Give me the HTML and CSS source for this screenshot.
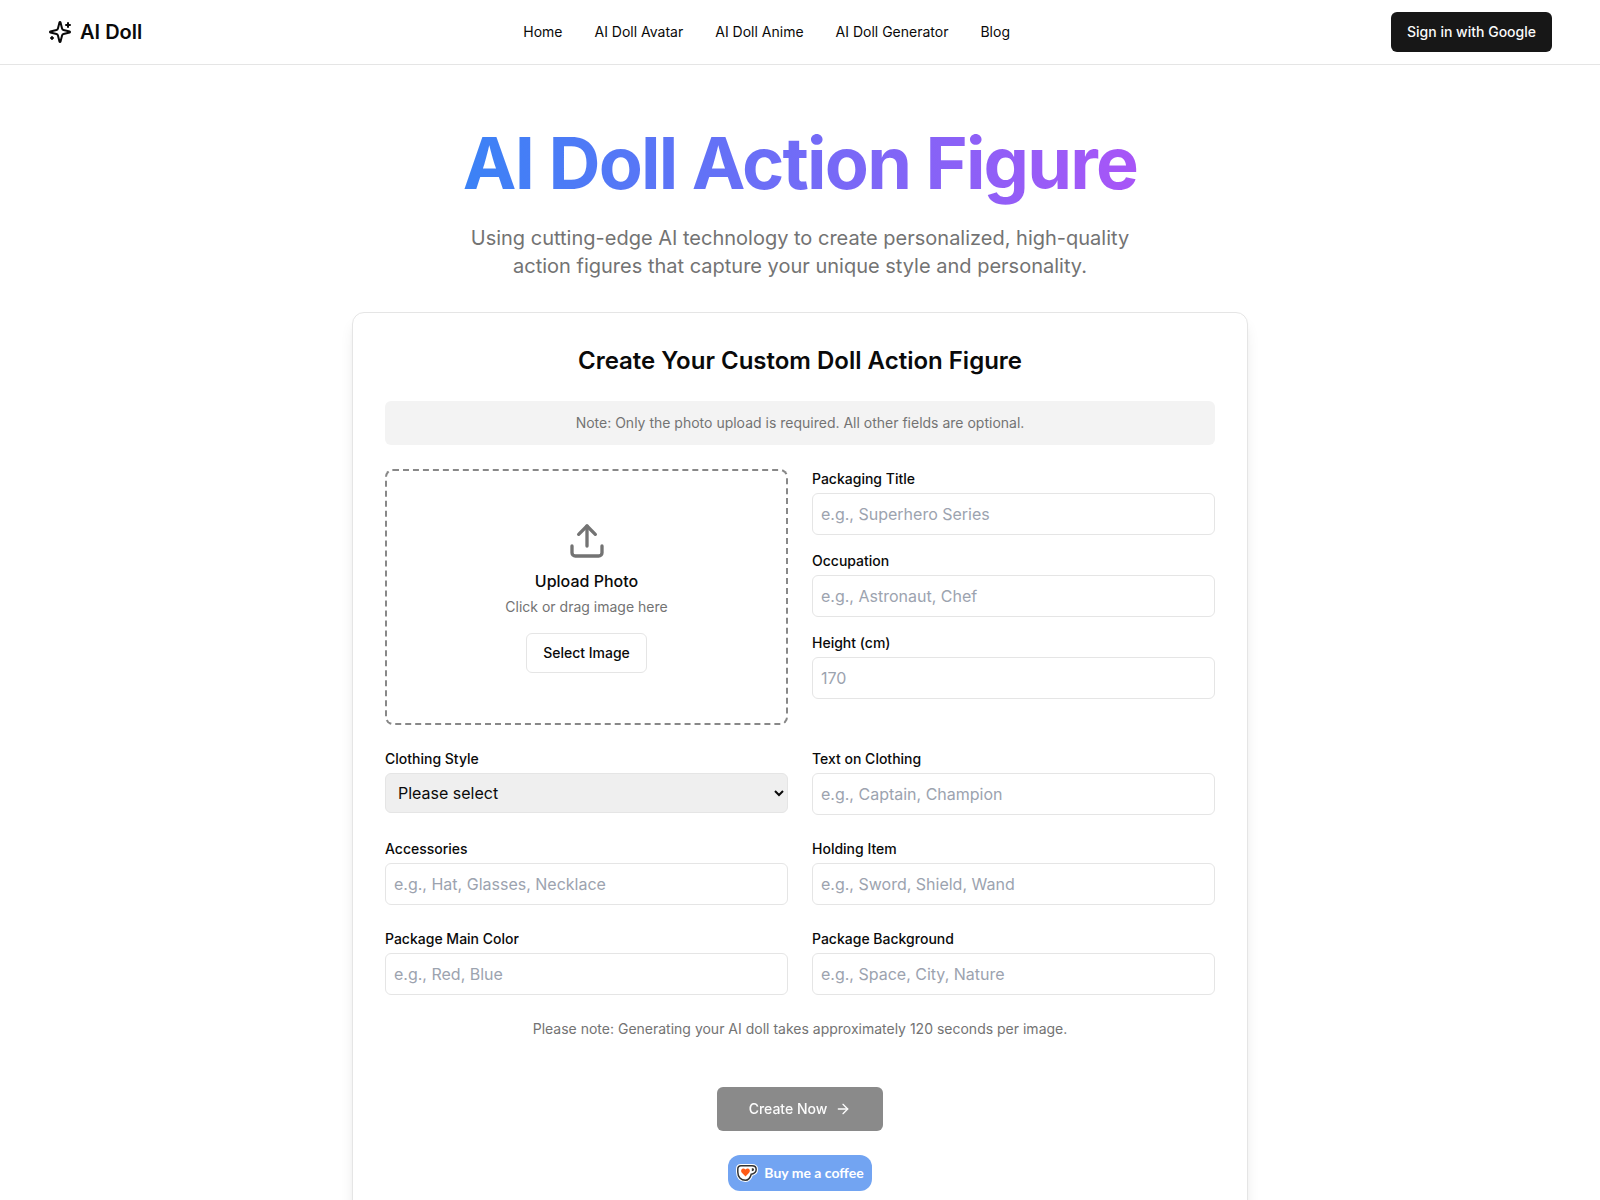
FILE: index.html
```html
<!DOCTYPE html>
<html lang="en">
<head>
    <meta charset="utf-8">
    <meta name="viewport" content="width=device-width, initial-scale=1">
    <title>AI Doll Action Figure</title>
    <link rel="stylesheet" href="styles.css">
</head>
<body>
    <header class="site-header">
        <a class="logo" href="#">
            <svg class="icon" width="24" height="24" viewBox="0 0 24 24" aria-hidden="true">
                <path d="M9.937 15.5A2 2 0 0 0 8.5 14.063l-6.135-1.582a.5.5 0 0 1 0-.962L8.5 9.936A2 2 0 0 0 9.937 8.5l1.582-6.135a.5.5 0 0 1 .963 0L14.063 8.5A2 2 0 0 0 15.5 9.937l6.135 1.581a.5.5 0 0 1 0 .964L15.5 14.063a2 2 0 0 0-1.437 1.437l-1.582 6.135a.5.5 0 0 1-.963 0z"/>
                <path d="M20 3v4"/>
                <path d="M22 5h-4"/>
                <path d="M4 17v2"/>
                <path d="M5 18H3"/>
            </svg>
            <span>AI Doll</span>
        </a>
        <nav class="site-nav">
            <a href="#">Home</a>
            <a href="#">AI Doll Avatar</a>
            <a href="#">AI Doll Anime</a>
            <a href="#">AI Doll Generator</a>
            <a href="#">Blog</a>
        </nav>
        <button class="btn btn-primary" type="button">Sign in with Google</button>
    </header>

    <main class="page">
        <h1 class="hero-title">AI Doll Action Figure</h1>
        <p class="hero-text">Using cutting-edge AI technology to create personalized, high-quality action figures that capture your unique style and personality.</p>

        <form class="card">
            <h2 class="card-title">Create Your Custom Doll Action Figure</h2>
            <p class="note">Note: Only the photo upload is required. All other fields are optional.</p>

            <div class="form-grid">
                <div class="upload">
                    <svg class="icon upload-icon" width="40" height="40" viewBox="0 0 24 24" aria-hidden="true">
                        <path d="M21 15v4a2 2 0 0 1-2 2H5a2 2 0 0 1-2-2v-4"/>
                        <path d="m17 8-5-5-5 5"/>
                        <path d="M12 3v12"/>
                    </svg>
                    <p class="upload-title">Upload Photo</p>
                    <p class="upload-hint">Click or drag image here</p>
                    <button class="btn btn-outline" type="button">Select Image</button>
                </div>

                <div class="field-stack">
                    <div class="field">
                        <label for="title">Packaging Title</label>
                        <input type="text" id="title" placeholder="e.g., Superhero Series">
                    </div>
                    <div class="field">
                        <label for="occupation">Occupation</label>
                        <input type="text" id="occupation" placeholder="e.g., Astronaut, Chef">
                    </div>
                    <div class="field">
                        <label for="height">Height (cm)</label>
                        <input type="number" id="height" placeholder="170">
                    </div>
                </div>

                <div class="field">
                    <label for="style">Clothing Style</label>
                    <select id="style">
                        <option>Please select</option>
                        <option>Casual</option>
                        <option>Formal</option>
                        <option>Sport</option>
                    </select>
                </div>
                <div class="field">
                    <label for="clothing-text">Text on Clothing</label>
                    <input type="text" id="clothing-text" placeholder="e.g., Captain, Champion">
                </div>
                <div class="field">
                    <label for="accessories">Accessories</label>
                    <input type="text" id="accessories" placeholder="e.g., Hat, Glasses, Necklace">
                </div>
                <div class="field">
                    <label for="holding">Holding Item</label>
                    <input type="text" id="holding" placeholder="e.g., Sword, Shield, Wand">
                </div>
                <div class="field">
                    <label for="main-color">Package Main Color</label>
                    <input type="text" id="main-color" placeholder="e.g., Red, Blue">
                </div>
                <div class="field">
                    <label for="background">Package Background</label>
                    <input type="text" id="background" placeholder="e.g., Space, City, Nature">
                </div>
            </div>

            <p class="time-note">Please note: Generating your AI doll takes approximately 120 seconds per image.</p>

            <div class="actions">
                <button class="btn btn-primary btn-large" type="submit" disabled>
                    Create Now
                    <svg class="icon" width="16" height="16" viewBox="0 0 24 24" aria-hidden="true">
                        <path d="M5 12h14"/>
                        <path d="m12 5 7 7-7 7"/>
                    </svg>
                </button>
                <a class="coffee" href="#">
                    <svg width="22" height="18" viewBox="0 0 22 18" aria-hidden="true">
                        <path d="M5 1.500H16C19 1.500 20.500 3.200 20.500 5.500 20.500 8.500 18 10 15.500 10.500 14.500 14.500 12.500 16.500 9.500 16.500 4.500 16.500 1.500 13 1.500 8V5C1.500 2.800 2.800 1.500 5 1.500z" fill="#fff" stroke="#fff" stroke-width="3"/>
                        <path d="M5 1.800H16C18.800 1.800 20.200 3.400 20.200 5.500 20.200 8.200 17.800 9.700 15.200 10.200 14.200 14.200 12.400 16.200 9.500 16.200 4.800 16.200 1.800 12.800 1.800 8V5C1.800 3 3 1.800 5 1.800z" fill="#fff" stroke="#333" stroke-width="1.500"/>
                        <path d="M15.800 4.200c1.600 0 2.200.5 2.200 1.400 0 1-.8 1.600-2.200 1.700z" fill="#333"/>
                        <path d="M9.500 12.500 6.100 9C3.400 6 7 2.800 9.500 5.500 12 2.800 15.600 6 12.900 9z" fill="#ff5a16"/>
                    </svg>
                    <span>Buy me a coffee</span>
                </a>
            </div>
        </form>
    </main>
</body>
</html>
```

FILE: styles.css
```css
* {
    box-sizing: border-box;
}
body {
    margin: 0;
    background: #fff;
    color: #0a0a0a;
    font-family: Inter, sans-serif;
    font-size: 16px;
    line-height: 24px;
}
h1, h2, p {
    margin: 0;
}
a {
    color: inherit;
    text-decoration: none;
}
button, input, select {
    font: inherit;
    color: inherit;
}
.icon {
    fill: none;
    stroke: currentColor;
    stroke-width: 2;
    stroke-linecap: round;
    stroke-linejoin: round;
}

/* header */
.site-header {
    display: flex;
    align-items: center;
    justify-content: space-between;
    padding: 12px 48px;
    border-bottom: 1px solid #e5e5e5;
}
.logo {
    display: flex;
    align-items: center;
    gap: 8px;
    font-size: 20px;
    font-weight: 600;
    line-height: 28px;
}
.site-nav {
    display: flex;
    gap: 32px;
    font-size: 14px;
    line-height: 20px;
}

/* buttons */
.btn {
    display: inline-flex;
    align-items: center;
    justify-content: center;
    gap: 8px;
    height: 40px;
    padding: 0 16px;
    border: 0;
    border-radius: 6px;
    font-size: 14px;
    font-weight: 500;
    line-height: 20px;
    cursor: pointer;
}
.btn-primary {
    background: #171717;
    color: #fafafa;
}
.btn-outline {
    border: 1px solid #e5e5e5;
    background: #fff;
}
.btn-large {
    height: 44px;
    padding: 0 32px;
}
.btn:disabled {
    opacity: 0.5;
    cursor: default;
}

/* hero */
.page {
    display: flex;
    flex-direction: column;
    align-items: center;
    padding: 53px 16px 64px;
}
.hero-title {
    margin-bottom: 16px;
    background: linear-gradient(to right, #3b82f6, #a855f7);
    background-clip: text;
    -webkit-background-clip: text;
    color: transparent;
    font-size: 72px;
    font-weight: 700;
    line-height: 90px;
    letter-spacing: -0.025em;
    text-align: center;
}
.hero-text {
    max-width: 700px;
    margin-bottom: 32px;
    color: #737373;
    font-size: 20px;
    line-height: 28px;
    text-align: center;
}

/* form card */
.card {
    width: 100%;
    max-width: 896px;
    padding: 32px;
    border: 1px solid #e5e5e5;
    border-radius: 12px;
    box-shadow: 0 10px 15px -3px rgba(0, 0, 0, 0.1), 0 4px 6px -4px rgba(0, 0, 0, 0.1);
}
.card-title {
    margin-bottom: 24px;
    font-size: 24px;
    font-weight: 600;
    line-height: 32px;
    text-align: center;
}
.note {
    margin-bottom: 24px;
    padding: 12px;
    border-radius: 6px;
    background: #f3f3f3;
    color: #737373;
    font-size: 14px;
    line-height: 20px;
    text-align: center;
}
.form-grid {
    display: grid;
    grid-template-columns: 1fr 1fr;
    gap: 24px;
}
.upload {
    display: flex;
    flex-direction: column;
    align-items: center;
    justify-content: center;
    min-height: 256px;
    border: 2px dashed #888;
    border-radius: 8px;
}
.upload-icon {
    margin-bottom: 8px;
    color: #737373;
}
.upload-title {
    font-weight: 500;
}
.upload-hint {
    margin: 4px 0 16px;
    color: #737373;
    font-size: 14px;
    line-height: 20px;
}
.field-stack {
    display: flex;
    flex-direction: column;
    gap: 16px;
}
.field {
    display: flex;
    flex-direction: column;
    gap: 4px;
}
.field label {
    font-size: 14px;
    font-weight: 500;
    line-height: 20px;
}
.field input {
    width: 100%;
    height: 42px;
    padding: 8px;
    border: 1px solid #e5e5e5;
    border-radius: 6px;
    background: #fff;
}
.field input::placeholder {
    color: #9ca3af;
}
.field select {
    width: 100%;
    height: 40px;
    padding: 0 8px;
    border: 1px solid #e5e5e5;
    border-radius: 6px;
    background: #efefef;
}
.time-note {
    margin: 24px 0 48px;
    color: #737373;
    font-size: 14px;
    line-height: 20px;
    text-align: center;
}
.actions {
    display: flex;
    flex-direction: column;
    align-items: center;
    gap: 24px;
}
.coffee {
    display: flex;
    align-items: center;
    gap: 6px;
    height: 36px;
    padding: 0 8px;
    border-radius: 12px;
    background: #72a4f2;
    color: #fff;
    font-family: Lato, sans-serif;
    font-size: 14px;
    font-weight: 700;
    line-height: 20px;
}
```
